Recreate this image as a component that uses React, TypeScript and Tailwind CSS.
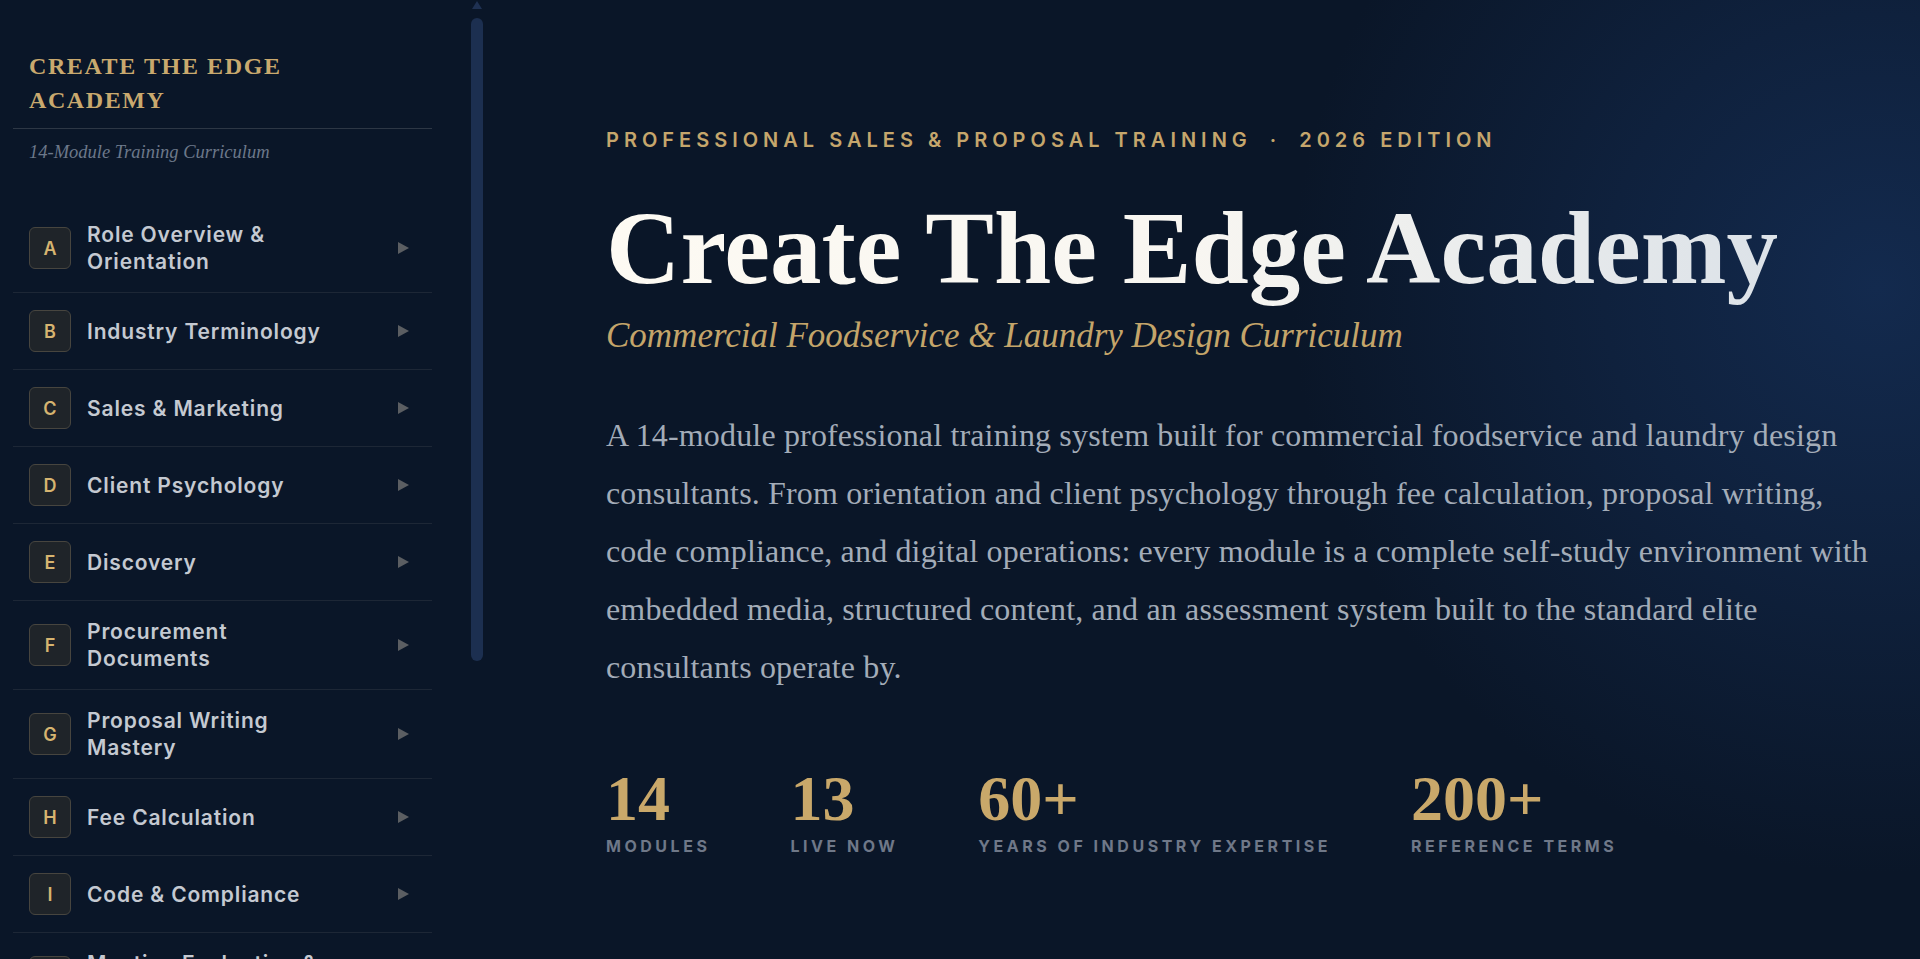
import React from "react";

type Item = { letter: string; lines: string[] };

const items: Item[] = [
  { letter: "A", lines: ["Role Overview &", "Orientation"] },
  { letter: "B", lines: ["Industry Terminology"] },
  { letter: "C", lines: ["Sales & Marketing"] },
  { letter: "D", lines: ["Client Psychology"] },
  { letter: "E", lines: ["Discovery"] },
  { letter: "F", lines: ["Procurement", "Documents"] },
  { letter: "G", lines: ["Proposal Writing", "Mastery"] },
  { letter: "H", lines: ["Fee Calculation"] },
  { letter: "I", lines: ["Code & Compliance"] },
  { letter: "J", lines: ["Meeting Evaluation &", "Documentation"] },
  { letter: "K", lines: ["Digital Operations"] },
  { letter: "L", lines: ["Project Management"] },
  { letter: "M", lines: ["Client Retention"] },
  { letter: "N", lines: ["Final Assessment"] },
];

const sans = "font-['Inter','Liberation_Sans',sans-serif]";
const serif = "font-['Liberation_Serif','DejaVu_Serif',serif]";

function Arrow() {
  return (
    <svg width="11" height="12" viewBox="0 0 11 12" className="shrink-0">
      <polygon points="0,0 11,6 0,12" fill="#5b5e62" />
    </svg>
  );
}

function NavRow({ item }: { item: Item }) {
  return (
    <div className="flex items-center border-b border-[#1d2736] px-4 py-[17px]">
      <div
        className={`flex h-[42px] w-[42px] shrink-0 items-center justify-center rounded-[6px] border border-[#47453f] bg-[#1f2429] text-[18px] font-semibold text-[#d6b470] ${sans}`}
      >
        {item.letter}
      </div>
      <div
        className={`ml-4 flex flex-col text-[21px] font-semibold leading-[27px] tracking-[0.04em] text-[#c4c9d1] ${sans}`}
      >
        {item.lines.map((l) => (
          <span key={l} className="whitespace-nowrap">
            {l}
          </span>
        ))}
      </div>
      <div className="ml-auto mr-[7px]">
        <Arrow />
      </div>
    </div>
  );
}

function Sidebar() {
  return (
    <aside className="flex h-screen w-[483px] shrink-0 overflow-hidden">
      <div className="w-[432px] shrink-0 pl-[13px]">
        <div className="border-b border-[#2d3745] px-4 pb-[11px] pt-[49px]">
          <div
            className={`text-[24px] font-bold uppercase leading-[34px] tracking-[1.6px] text-[#c9a96e] ${serif}`}
          >
            Create The Edge
            <br />
            Academy
          </div>
        </div>
        <div
          className={`mt-[10px] px-4 text-[18.5px] italic leading-[27px] text-[#6c788a] ${serif}`}
        >
          14-Module Training Curriculum
        </div>
        <nav className="mt-[38px] flex flex-col">
          {items.map((it) => (
            <NavRow key={it.letter} item={it} />
          ))}
        </nav>
      </div>
      <div className="flex-1" />
      <div className="flex w-[12px] shrink-0 flex-col items-center">
        <svg width="10" height="9" viewBox="0 0 10 9" className="mt-[1px]">
          <polygon points="5,0 10,8 0,8" fill="#1f3152" />
        </svg>
        <div className="mt-[8px] h-[643px] w-[12px] rounded-full bg-[#1c2f50]" />
      </div>
    </aside>
  );
}

const stats = [
  { n: "14", l: "Modules" },
  { n: "13", l: "Live Now" },
  { n: "60+", l: "Years of Industry Expertise" },
  { n: "200+", l: "Reference Terms" },
];

export default function App() {
  return (
    <div className="flex h-screen w-full overflow-hidden bg-[#0a1628]">
      <Sidebar />
      <main className="h-screen flex-1 bg-[radial-gradient(circle_780px_at_97%_30%,#132a4e_0%,#0f213d_35%,#0a1628_75%)] pl-[123px] pt-[130px]">
        <div
          className={`flex items-center whitespace-nowrap text-[20px] font-semibold uppercase leading-none tracking-[0.25em] text-[#c5a66c] ${sans}`}
        >
          <span>Professional Sales &amp; Proposal Training</span>
          <span className="mx-[18px]">·</span>
          <span>2026 Edition</span>
        </div>
        <h1
          className={`mt-[47px] w-fit whitespace-nowrap bg-linear-to-r from-[#fdfaf3] via-[#f8f6f1] to-[#dce2e8] bg-clip-text pb-[24px] text-[103px] font-bold leading-none text-transparent ${serif}`}
        >
          Create The Edge Academy
        </h1>
        <div
          className={`mt-[-6px] whitespace-nowrap text-[35px] italic leading-none text-[#c4a56a] ${serif}`}
        >
          Commercial Foodservice &amp; Laundry Design Curriculum
        </div>
        <p
          className={`mt-[53px] w-[1305px] text-[32px] leading-[58px] tracking-[0.005em] text-[#a3acb8] ${serif}`}
        >
          A 14-module professional training system built for commercial foodservice and laundry design
          <br />
          consultants. From orientation and client psychology through fee calculation, proposal writing,
          <br />
          code compliance, and digital operations: every module is a complete self-study environment with
          <br />
          embedded media, structured content, and an assessment system built to the standard elite
          <br />
          consultants operate by.
        </p>
        <div className="mt-[71px] flex gap-20">
          {stats.map((s) => (
            <div key={s.l} className="flex flex-col">
              <div
                className={`text-[64px] font-bold leading-none text-[#c9a86a] ${serif}`}
              >
                {s.n}
              </div>
              <div
                className={`mt-[7px] whitespace-nowrap text-[16px] font-bold uppercase leading-none tracking-[0.22em] text-[#6f7888] ${sans}`}
              >
                {s.l}
              </div>
            </div>
          ))}
        </div>
      </main>
    </div>
  );
}
